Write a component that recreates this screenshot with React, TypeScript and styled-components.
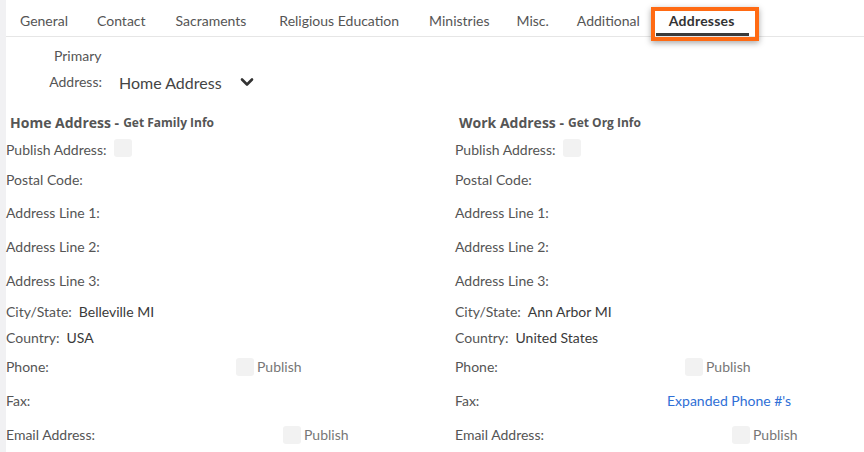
import React from "react";
import styled, { createGlobalStyle } from "styled-components";

const Global = createGlobalStyle`
  html, body { margin: 0; padding: 0; background: #fff; }
  body { font-family: Lato, "Open Sans", sans-serif; color: #555; }
`;

const Page = styled.div`
  display: flex;
  width: 864px;
  height: 452px;
  overflow: hidden;
  background: #fff;
`;

const Strip = styled.div`
  width: 6px;
  flex: none;
  background: #f1f1f3;
`;

const Main = styled.div`
  flex: 1;
  display: flex;
  flex-direction: column;
`;

const TabBar = styled.div`
  display: flex;
  align-items: stretch;
  height: 37px;
  box-sizing: border-box;
  padding-top: 4px;
  border-bottom: 1px solid #e6e6e6;
  padding-left: 14px;
`;

const Tab = styled.div<{ $gap: number }>`
  position: relative;
  display: flex;
  align-items: center;
  font-size: 14px;
  color: #555;
  margin-right: ${(p) => p.$gap}px;
  white-space: nowrap;
`;

const ActiveTab = styled.div`
  position: relative;
  display: flex;
  align-items: center;
  font-size: 14px;
  font-weight: 700;
  letter-spacing: 0.2px;
  color: #333;
  padding: 0 14px 0 13px;
  margin-left: -13px;
  &::after {
    content: "";
    position: absolute;
    left: 0;
    right: 0;
    bottom: 0px;
    height: 3px;
    background: #3a3a3a;
  }
`;

const Highlight = styled.div`
  position: absolute;
  left: -5px;
  right: -10px;
  top: 3px;
  bottom: -5px;
  border: 4px solid #ff6a13;
  box-shadow: 0 2px 6px rgba(0, 0, 0, 0.35);
  pointer-events: none;
`;

const PrimaryBlock = styled.div`
  display: grid;
  grid-template-columns: 96px auto auto;
  column-gap: 17px;
  row-gap: 6px;
  align-items: center;
  margin-top: 9px;
`;

const SmallLabel = styled.div`
  font-size: 14px;
  color: #555;
  text-align: right;
  line-height: 20px;
`;

const PrimaryLabel = styled(SmallLabel)`
  text-align: left;
  padding-left: 48px;
`;

const Select = styled.div`
  display: flex;
  align-items: center;
  gap: 18px;
  font-size: 16px;
  color: #444;
`;

const Columns = styled.div`
  display: grid;
  grid-template-columns: 449px 1fr;
  margin-top: 20px;
`;

const Column = styled.div`
  display: flex;
  flex-direction: column;
`;

const Heading = styled.div`
  font-family: "Open Sans", Lato, sans-serif;
  font-size: 14px;
  font-weight: 700;
  color: #555;
  padding-left: 4px;
  height: 20px;
  display: flex;
  align-items: center;
`;

const HeadingLink = styled.span`
  font-size: 12px;
  font-weight: 700;
  margin-left: 4px;
`;

const Row = styled.div<{ $h: number }>`
  display: flex;
  align-items: flex-end;
  height: ${(p) => p.$h}px;
  font-size: 14px;
`;

const Label = styled.span<{ $w?: number }>`
  color: #555;
  line-height: 20px;
  white-space: nowrap;
  ${(p) => (p.$w ? `width: ${p.$w}px; flex: none;` : "")}
`;

const Value = styled.span`
  color: #3a3a3a;
  margin-left: 7px;
  line-height: 20px;
`;

const Check = styled.span<{ $up?: number }>`
  display: inline-block;
  width: 18px;
  height: 18px;
  background: #f2f2f2;
  border-radius: 3px;
  margin-left: 8px;
  align-self: flex-end;
  margin-bottom: ${(p) => p.$up ?? 2}px;
`;

const Box = styled(Check)`
  margin-left: 0;
`;

const Publish = styled.span`
  color: #777;
  line-height: 20px;
  margin-left: 3px;
`;

const Link = styled.span`
  color: #2f6fd6;
  line-height: 20px;
`;

const Chevron = () => (
  <svg width="14" height="10" viewBox="0 0 14 10">
    <path d="M2 2.5 L7 7.5 L12 2.5" fill="none" stroke="#333" strokeWidth="2.6" strokeLinecap="round" strokeLinejoin="round" />
  </svg>
);

type Side = {
  title: string;
  link: string;
  city: string;
  country: string;
  phoneW: number;
  emailW: number;
  fax?: number;
};

const AddressColumn = ({ s }: { s: Side }) => (
  <Column>
    <Heading>
      {s.title} -<HeadingLink>{s.link}</HeadingLink>
    </Heading>
    <Row $h={28}>
      <Label>Publish Address:</Label>
      <Check $up={3} />
    </Row>
    <Row $h={30}>
      <Label>Postal Code:</Label>
    </Row>
    <Row $h={33}>
      <Label>Address Line 1:</Label>
    </Row>
    <Row $h={34}>
      <Label>Address Line 2:</Label>
    </Row>
    <Row $h={34}>
      <Label>Address Line 3:</Label>
    </Row>
    <Row $h={31}>
      <Label>City/State:</Label>
      <Value>{s.city}</Value>
    </Row>
    <Row $h={26}>
      <Label>Country:</Label>
      <Value>{s.country}</Value>
    </Row>
    <Row $h={29}>
      <Label $w={s.phoneW}>Phone:</Label>
      <Box $up={1} />
      <Publish>Publish</Publish>
    </Row>
    <Row $h={34}>
      <Label $w={s.fax ?? undefined}>Fax:</Label>
      {s.fax ? <Link>Expanded Phone #'s</Link> : null}
    </Row>
    <Row $h={34}>
      <Label $w={s.emailW}>Email Address:</Label>
      <Box $up={1} />
      <Publish>Publish</Publish>
    </Row>
  </Column>
);

const tabs: [string, number][] = [
  ["General", 29],
  ["Contact", 30],
  ["Sacraments", 33],
  ["Religious Education", 30],
  ["Ministries", 27],
  ["Misc.", 28],
  ["Additional", 29],
];

export default function App() {
  return (
    <>
      <Global />
      <Page>
        <Strip />
        <Main>
          <TabBar>
            {tabs.map(([t, g]) => (
              <Tab key={t} $gap={g}>
                {t}
              </Tab>
            ))}
            <ActiveTab>
              Addresses
              <Highlight />
            </ActiveTab>
          </TabBar>
          <PrimaryBlock>
            <PrimaryLabel>Primary</PrimaryLabel>
            <div />
            <div />
            <SmallLabel>Address:</SmallLabel>
            <Select>
              Home Address
              <Chevron />
            </Select>
            <div />
          </PrimaryBlock>
          <Columns>
            <AddressColumn
              s={{ title: "Home Address", link: "Get Family Info", city: "Belleville MI", country: "USA", phoneW: 230, emailW: 277 }}
            />
            <AddressColumn
              s={{ title: "Work Address", link: "Get Org Info", city: "Ann Arbor MI", country: "United States", phoneW: 230, emailW: 277, fax: 212 }}
            />
          </Columns>
        </Main>
      </Page>
    </>
  );
}
